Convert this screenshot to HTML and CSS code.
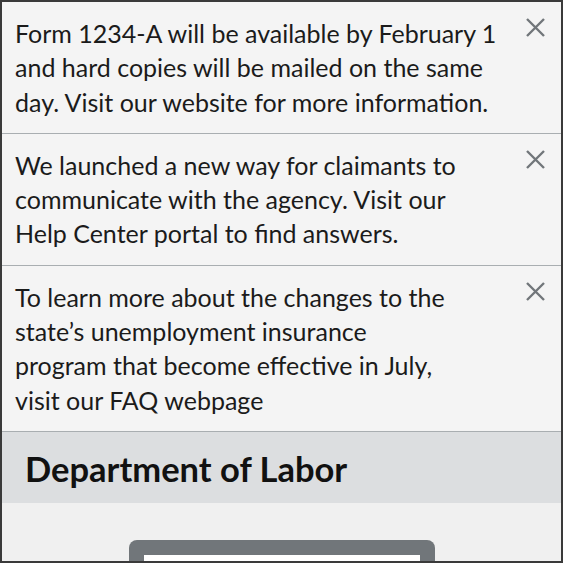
FILE: index.html
```html
<!DOCTYPE html>
<html lang="en">
<head>
<meta charset="utf-8">
<title>Department of Labor</title>
<link rel="stylesheet" href="styles.css">
</head>
<body>
<div class="page">
  <section class="alerts">
    <div class="alert">
      <p class="alert-text">Form 1234-A will be available by February 1 and hard copies will be mailed on the same day. Visit our website for more information.</p>
      <button class="close" aria-label="Close">
        <svg viewBox="0 0 21 21" width="21" height="21"><path d="M2 2L19 19M19 2L2 19"/></svg>
      </button>
    </div>
    <div class="alert">
      <p class="alert-text">We launched a new way for claimants to communicate with the agency. Visit our Help Center portal to find answers.</p>
      <button class="close" aria-label="Close">
        <svg viewBox="0 0 21 21" width="21" height="21"><path d="M2 2L19 19M19 2L2 19"/></svg>
      </button>
    </div>
    <div class="alert">
      <p class="alert-text narrow">To learn more about the changes to the state’s unemployment insurance program that become effective in July, visit our FAQ webpage</p>
      <button class="close" aria-label="Close">
        <svg viewBox="0 0 21 21" width="21" height="21"><path d="M2 2L19 19M19 2L2 19"/></svg>
      </button>
    </div>
  </section>
  <header class="site-header">
    <h1 class="site-title">Department of Labor</h1>
  </header>
  <main class="main">
    <div class="card">
      <div class="card-inner"></div>
    </div>
  </main>
</div>
</body>
</html>
```
FILE: styles.css
```css
*{box-sizing:border-box}
html,body{margin:0;padding:0}
body{width:563px;height:563px;overflow:hidden;font-family:Lato,"Liberation Sans",sans-serif;color:#1b1b1b}
.page{width:563px;height:563px;border:2px solid #3a3a3a;background:#f0f0f0;overflow:hidden;display:flex;flex-direction:column}
.alerts{display:flex;flex-direction:column}
.alert{display:flex;align-items:flex-start;justify-content:space-between;padding:14px 15px 14px 13px;background:#f4f4f4;border-bottom:1px solid #a9aeb1}
.alert-text{margin:0;flex:0 0 484px;font-size:25px;line-height:34.3px}
.alert-text.narrow{flex-basis:445px}
.close{margin:1px 0 0 0;padding:0;border:0;background:none;width:21px;height:21px;display:block;cursor:pointer}
.close svg{display:block;stroke:#71767a;stroke-width:2.4;fill:none}
.site-header{background:#dcdee0;padding:16px 23px 14px}
.site-title{margin:0;font-size:34.5px;line-height:41px;font-weight:700;color:#111}
.main{flex:1;display:flex;justify-content:center;padding-top:37px}
.card{width:306px;height:80px;background:#71767a;border-radius:8px 8px 0 0;padding:15px 15px 0}
.card-inner{height:100%;background:#fff}
```
